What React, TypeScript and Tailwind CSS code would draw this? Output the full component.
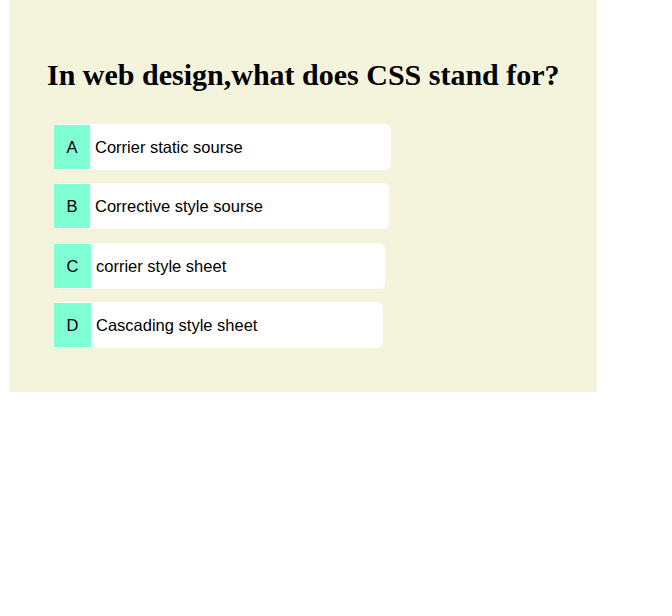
import React from "react";

const opts = [
  { l: "A", t: "Corrier static sourse", w: "w-[337px]", lw: "w-[36px]" },
  { l: "B", t: "Corrective style sourse", w: "w-[335px]", lw: "w-[36px]" },
  { l: "C", t: "corrier style sheet", w: "w-[331px]", lw: "w-[37px]" },
  { l: "D", t: "Cascading style sheet", w: "w-[329px]", lw: "w-[37px]" },
];

export default function App() {
  return (
    <div className="min-h-[616px] bg-white">
      <div className="ml-[9px] w-[588px] h-[392px] bg-[#f4f4dc] pt-[56px]">
        <h1
          className="pl-[38px] text-[30px] leading-[38px] font-bold text-black"
          style={{ fontFamily: '"Liberation Serif", "Times New Roman", serif' }}
        >
          In web design,what does CSS stand for?
        </h1>
        <div className="mt-[30px] ml-[45px] flex flex-col gap-[13px]">
          {opts.map((o, i) => (
            <div
              key={o.l}
              className={`${o.w} h-[46px] bg-white rounded-md py-[1px] flex items-stretch ${i === 2 ? "mt-[1px]" : ""}`}
              style={{ fontFamily: '"Liberation Sans", Arial, sans-serif' }}
            >
              <div className={`${o.lw} bg-[#7fffd4] flex items-center justify-center text-[16.5px] text-black`}>
                {o.l}
              </div>
              <div className="pl-[5px] flex items-center text-[16.5px] text-black">{o.t}</div>
            </div>
          ))}
        </div>
      </div>
    </div>
  );
}
